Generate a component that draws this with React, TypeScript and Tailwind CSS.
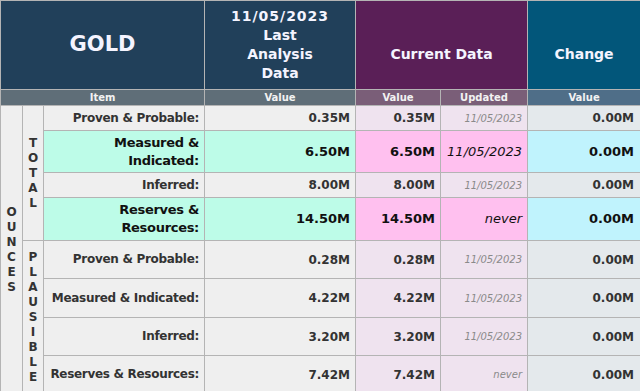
type Row = {
  label: string;
  last: string;
  current: string;
  updated: string;
  change: string;
  hl?: boolean;
  h: string;
};

const rows: Row[] = [
  { label: "Proven & Probable:", last: "0.35M", current: "0.35M", updated: "11/05/2023", change: "0.00M", h: "h-[25px]" },
  { label: "Measured & Indicated:", last: "6.50M", current: "6.50M", updated: "11/05/2023", change: "0.00M", hl: true, h: "h-[42px]" },
  { label: "Inferred:", last: "8.00M", current: "8.00M", updated: "11/05/2023", change: "0.00M", h: "h-[25px]" },
  { label: "Reserves & Resources:", last: "14.50M", current: "14.50M", updated: "never", change: "0.00M", hl: true, h: "h-[43px]" },
  { label: "Proven & Probable:", last: "0.28M", current: "0.28M", updated: "11/05/2023", change: "0.00M", h: "h-[38px]" },
  { label: "Measured & Indicated:", last: "4.22M", current: "4.22M", updated: "11/05/2023", change: "0.00M", h: "h-[39px]" },
  { label: "Inferred:", last: "3.20M", current: "3.20M", updated: "11/05/2023", change: "0.00M", h: "h-[38px]" },
  { label: "Reserves & Resources:", last: "7.42M", current: "7.42M", updated: "never", change: "0.00M", h: "h-[38px]" },
];

function Vertical({ text }: { text: string }) {
  return (
    <div className="flex flex-col items-center text-[12px] leading-[15px] font-bold text-[#333]">
      {text.split("").map((c, i) => (
        <span key={i}>{c}</span>
      ))}
    </div>
  );
}

const cell = "border border-[#b4b4b4]";

export default function App() {
  return (
    <div className="w-[640px] h-[391px] overflow-hidden bg-white" style={{ fontFamily: '"DejaVu Sans", Verdana, sans-serif' }}>
      <table className="w-[640px] table-fixed border-collapse">
        <colgroup>
          <col className="w-[22px]" />
          <col className="w-[21px]" />
          <col className="w-[161px]" />
          <col className="w-[151px]" />
          <col className="w-[85px]" />
          <col className="w-[87px]" />
          <col className="w-[113px]" />
        </colgroup>
        <thead>
          <tr className="h-[89px] text-[#f4f4ff] font-bold">
            <th colSpan={3} className={`${cell} bg-[#21405a] text-[21px]`}>GOLD</th>
            <th className={`${cell} bg-[#21405a] text-[14px] leading-[19px]`}>
              <span className="tracking-[1px]">11/05/2023</span>
              <br />
              Last
              <br />
              Analysis
              <br />
              Data
            </th>
            <th colSpan={2} className={`${cell} bg-[#5a1f57] text-[14px] pt-[18px]`}>Current Data</th>
            <th className={`${cell} bg-[#02567a] text-[14px] pt-[18px]`}>Change</th>
          </tr>
          <tr className="h-[16px] text-[10px] leading-[12px] font-bold text-[#f2f2f2]">
            <th colSpan={3} className={`${cell} bg-[#5f6e78]`}>Item</th>
            <th className={`${cell} bg-[#5f6e78]`}>Value</th>
            <th className={`${cell} bg-[#7a5e78]`}>Value</th>
            <th className={`${cell} bg-[#7a5e78]`}>Updated</th>
            <th className={`${cell} bg-[#4f6e88]`}>Value</th>
          </tr>
        </thead>
        <tbody>
          {rows.map((r, i) => {
            const big = r.hl ? "text-[13px] text-[#111]" : "text-[12px] text-[#333]";
            return (
              <tr key={i} className={r.h}>
                {i === 0 && (
                  <td rowSpan={8} className={`${cell} bg-[#efefef] align-middle`}>
                    <Vertical text="OUNCES" />
                  </td>
                )}
                {(i === 0 || i === 4) && (
                  <td rowSpan={4} className={`${cell} bg-[#efefef] align-middle`}>
                    <Vertical text={i === 0 ? "TOTAL" : "PLAUSIBLE"} />
                  </td>
                )}
                <td
                  className={`${cell} text-right pr-[5px] font-bold tracking-[-0.3px] ${
                    r.hl
                      ? "bg-[#bdfce8] text-[13px] leading-[18px] text-[#111]"
                      : "bg-[#efefef] text-[12px] leading-[15px] text-[#333] whitespace-nowrap"
                  }`}
                >
                  {r.label}
                </td>
                <td className={`${cell} text-right pr-[5px] font-bold ${big} ${r.hl ? "bg-[#bdfce8]" : "bg-[#efefef]"}`}>
                  {r.last}
                </td>
                <td className={`${cell} text-right pr-[5px] font-bold ${big} ${r.hl ? "bg-[#ffc0ef]" : "bg-[#efe3ef]"}`}>
                  {r.current}
                </td>
                <td
                  className={`${cell} text-right pr-[5px] italic ${
                    r.hl ? "bg-[#ffc0ef] text-[13px] text-[#111]" : "bg-[#efe3ef] text-[10px] text-[#8a8a8a]"
                  }`}
                >
                  {r.updated}
                </td>
                <td className={`${cell} text-right pr-[6px] font-bold ${big} ${r.hl ? "bg-[#c0f3fd]" : "bg-[#e4e9ec]"}`}>
                  {r.change}
                </td>
              </tr>
            );
          })}
        </tbody>
      </table>
    </div>
  );
}
